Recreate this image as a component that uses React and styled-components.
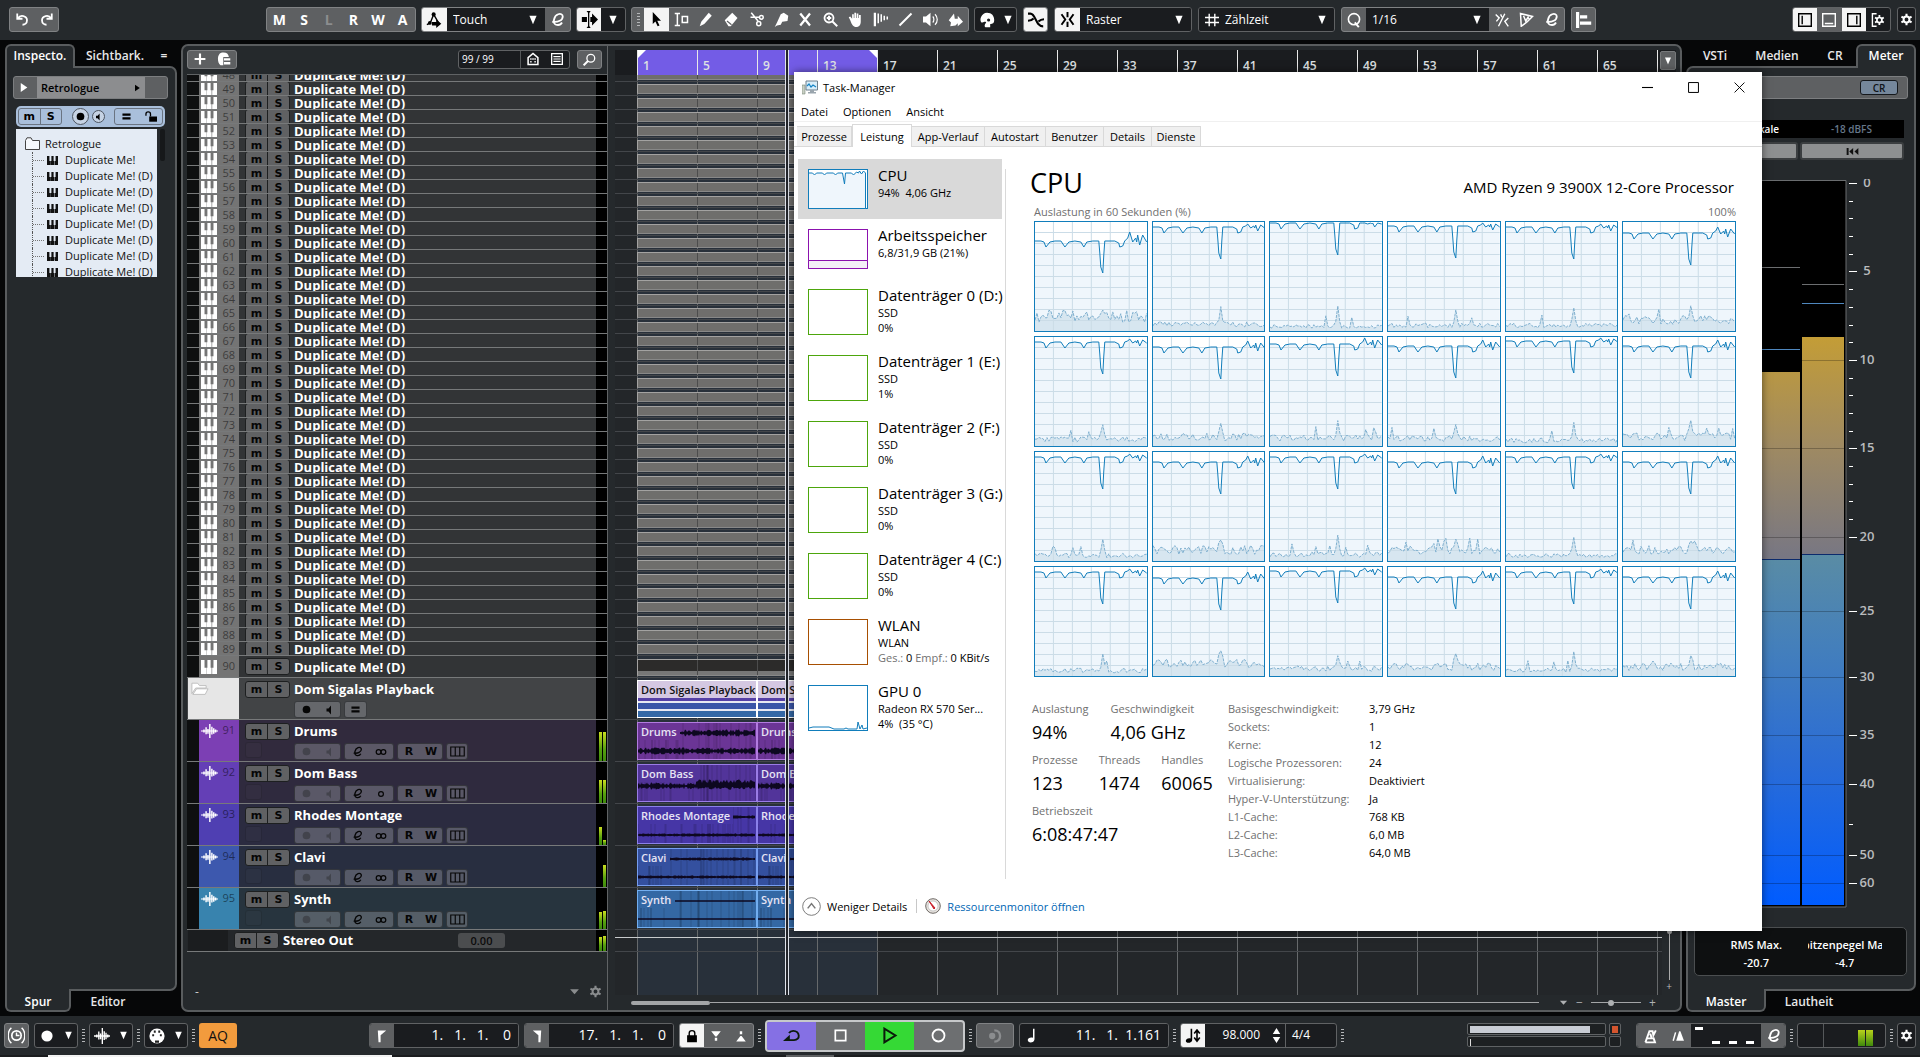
import React from "react";
import styled, { createGlobalStyle, css } from "styled-components";

/* ---------- theme values ---------- */
const c = {
  panel: "#25292c",
  edge: "#595c5e",
  btn: "#5e6062",
  btnEdge: "#808284",
  field: "#1a1c1f",
  fieldEdge: "#606264",
  light: "#f4f4f4",
  cpu: "#117dbb",
};

const Global = createGlobalStyle`
  * { box-sizing: border-box; }
  body { margin: 0; background: #060708; font-family: "Open Sans", "Noto Sans", sans-serif; font-size: 12px; color: #fff; }
  button, select { font-family: inherit; color: inherit; margin: 0; padding: 0; border: 0; background: none; border-radius: 0; }
  svg { display: block; flex: none; }
`;

/* ---------- pseudo random helper for drawings ---------- */
const rng = (seed) => {
  let s = seed * 7919 + 17;
  return () => {
    s = (s * 16807) % 2147483647;
    return s / 2147483647;
  };
};

/* ---------- icons ---------- */
const S = { fill: "none", stroke: "currentColor", strokeWidth: 2 };
const GEAR = (
  <>
    <circle cx="10" cy="10" r="4.500" {...S} strokeWidth="3" />
    <path d="M10 1v4M10 15v4M2.200 5.500l3.500 2M14.300 12.500l3.500 2M2.200 14.500l3.500-2M14.300 7.500l3.500-2" {...S} strokeWidth="3.200" />
  </>
);
const icons = {
  undo: <path d="M3 2v7h7M4 8.500C7 3 16 5 16 11c0 4-3 6-6 6" {...S} strokeWidth="2.400" />,
  redo: <path d="M17 2v7h-7M16 8.500C13 3 4 5 4 11c0 4 3 6 6 6" {...S} strokeWidth="2.400" />,
  down: <path d="M4 3h12l-6 14z" fill="currentColor" />,
  smallDown: <path d="M2 6h16l-8 9z" fill="currentColor" />,
  right: <path d="M5 2v16l12-8z" fill="currentColor" />,
  auto: (
    <>
      <path d="M1 16L5 14L9 4l7 12" {...S} strokeWidth="1.600" />
      <circle cx="9" cy="4" r="2.400" fill="currentColor" />
      <circle cx="4.500" cy="14" r="2.200" fill="currentColor" />
      <path d="M7 13h5v-3l6 5-6 5v-3H7z" fill="currentColor" />
    </>
  ),
  edit: <path d="M3 13c8 1 14-2 14-7 0-3-3-4-6-3-6 2-8 12-3 14 4 1 7-1 8-3" {...S} strokeWidth="2.400" />,
  scroll: (
    <>
      <path d="M1 7h6v6H1zM11 7h2V3l7 7-7 7v-4h-2z" fill="currentColor" />
      <path d="M9 0v20" stroke="currentColor" strokeWidth="1.500" />
      <path d="M6.500 0h5L9 3zM6.500 20h5L9 17z" fill="currentColor" />
    </>
  ),
  pointer: <path d="M5 0v16l3.500-3.500L11.500 19l2.500-1-3-6.500h5z" fill="currentColor" />,
  range: <><path d="M1 2h7M1 18h7M4.500 2v16" {...S} /><path d="M11 6h7v8h-7z" {...S} /></>,
  pencil: <path d="M1 19l2-6L13 1l4 4L7 16z" fill="currentColor" />,
  eraser: <><path d="M1 11L11 1l7 7-9 11H6z" fill="currentColor" /><path d="M4 12l6 5" stroke="#5e6062" strokeWidth="1.500" /></>,
  scissors: <><path d="M3 1l9 11M2 7l12 0" {...S} /><circle cx="16.500" cy="7" r="2.500" {...S} /><circle cx="13" cy="15.500" r="2.700" {...S} /></>,
  glue: <path d="M9 3l4-2 6 4-1 7-7 1-2 4-5 1-3 2 3-6z" fill="currentColor" />,
  mute: <path d="M3 2l13 16M16 2L3 18" {...S} strokeWidth="3" />,
  zoom: <><circle cx="8" cy="8" r="6" {...S} strokeWidth="2.400" /><path d="M12 12l7 7M5 8h6M8 5v6" {...S} strokeWidth="2.600" /></>,
  hand: <path d="M3 11L1 7l2-1 2.500 3V3h2.200v5h.8V1h2.300v7h.8V2h2.200v6h.8V4H17v9c0 4-2 7-6 7s-6-3-8-9z" fill="currentColor" />,
  comp: <path d="M1 1h3v18H1zM6 2h2v13H6zM10 3h2v10h-2zM14 5h2v6h-2zM18 6h2v4h-2z" fill="currentColor" />,
  line: <path d="M2 18L18 2" {...S} strokeWidth="2.600" />,
  speaker: <><path d="M0 6h4l6-5v18l-6-5H0z" fill="currentColor" /><path d="M13 6c2 2 2 6 0 8M16 3c4 4 4 10 0 14" {...S} strokeWidth="1.600" /></>,
  bucket: <path d="M1 11l7-9 1 7h4V5l7 8-7 6v-4l-3 3-7 1 1-5z" fill="currentColor" />,
  palette: <path fillRule="evenodd" d="M10 1c6 0 9 4 9 9 0 4-2 5-5 5v4H9c-3 0-2-4 0-6-2-2-3 1-6 0C0 10 3 1 10 1zM12 8a2 2 0 100 4 2 2 0 000-4z" fill="currentColor" />,
  cross: <path d="M0 2h3c7 0 6 16 16 16M0 11c4 0 5-1 7-3M20 9c-4 0-5 1-7 3" {...S} strokeWidth="2.600" />,
  snap: <path d="M10 0v7M10 13v7M2 3l5 7-5 7M18 3l-5 7 5 7" {...S} strokeWidth="2.600" />,
  hash: <path d="M6 1v18M14 1v18M0 6.500h20M0 13.500h20" {...S} />,
  q: <><circle cx="10" cy="9" r="7" {...S} /><path d="M11 13l5 6" {...S} strokeWidth="2.400" /></>,
  swing: <path d="M1 2l5 5-4 5M14 1L5 19M19 7l-5 5 5 7M8 2l2 4" {...S} />,
  quant: <path d="M2 2l16 4-7 7-8 6zM6 5l3 7 3-5 2 4" {...S} />,
  align: <path d="M2 0v20M5 6h9M5 14h14" {...S} strokeWidth="4" />,
  plus: <path d="M10 1v18M1 10h18" {...S} strokeWidth="3.600" />,
  preset: <><path d="M6 1c7-1 10 1 11 6H9v12H5C0 15 0 3 6 1z" fill="currentColor" /><path d="M10 10.500h9M10 16h9" {...S} strokeWidth="3.400" /></>,
  house: <><path d="M3 18V8l7-6 7 6v10z" {...S} strokeWidth="2.200" /><path d="M6 10h2M12 10h2M9 10h2M6 14h2M12 14h2" {...S} strokeWidth="2" /></>,
  list: <><path d="M1 1h18v18H1z" {...S} strokeWidth="2.400" /><path d="M4 6h12M4 10h12M4 14h12" {...S} /></>,
  search: <><circle cx="12" cy="8" r="6" {...S} /><path d="M8 12l-7 7" {...S} strokeWidth="3" /></>,
  piano: <path d="M0 0h4.400v11h2V20H0zM8 0h4v11h1.200V20H6.800v-9H8zM15.600 0H20v20h-6v-9h1.600z" fill="currentColor" />,
  wave: <path d="M0 10h20M3.500 8v4M6 4.500v10M8.200 7v7M10.400 0v20M12.800 4v11M15 6v8M17.200 8v4" stroke="currentColor" strokeWidth="1.700" fill="none" />,
  folder: <path d="M2 4h6l2 3h7v3H6l-4 7zM7 11h12l-3 7H3z" fill="#fff" stroke="#b9b9b9" strokeWidth="1" />,
  dot: <circle cx="10" cy="10" r="7" fill="currentColor" />,
  mon: <path d="M5 7h4l5-6v18l-5-6H5z" fill="currentColor" />,
  eq: <path d="M1 6h18M1 14h18" {...S} strokeWidth="5" />,
  stereo: <><circle cx="6" cy="10" r="4" {...S} /><circle cx="14" cy="10" r="4" {...S} /></>,
  mono: <circle cx="10" cy="10" r="4" {...S} />,
  lanes: <path d="M1 4h18v12H1zM7 4v12M13 4v12" {...S} strokeWidth="1.500" />,
  unlock: <><path d="M8 10h12v8H8z" fill="currentColor" /><path d="M10 10V6c0-4-7-4-7 0v3" {...S} /></>,
  lock: <><path d="M3 9h14v10H3z" fill="currentColor" /><path d="M6 10V6c0-5 8-5 8 0v4" {...S} /></>,
  gear: GEAR,
  zoneL: <path d="M1 1h18v18H1zM6 4v12" {...S} />,
  zoneB: <path d="M1 1h18v18H1zM4 15h12" {...S} />,
  zoneR: <path d="M1 1h18v18H1zM14 4v12" {...S} />,
  setup: <><path d="M8 1H2v18h6" {...S} /><g transform="translate(4 2) scale(.8)">{GEAR}</g></>,
  clock: <><circle cx="10" cy="10" r="5.500" {...S} /><path d="M10 6.500V10h3.500M4 1c-5 4-5 14 0 18M16 1c5 4 5 14 0 18" {...S} strokeWidth="1.700" /></>,
  midi: <><circle cx="10" cy="10" r="9.500" fill="currentColor" /><path d="M4 9h2.400M6 4.500h2.400M11.600 4.500H14M13.600 9H16M7.500 17h5" stroke="#222" strokeWidth="2.600" /></>,
  locL: <path d="M4 2h12L8 9v10H5z" fill="currentColor" />,
  locR: <path d="M16 2H4l8 7v10h3z" fill="currentColor" />,
  punchI: <path d="M2 2h16l-7 9H9zM8 13h4v5H8z" fill="currentColor" />,
  punchO: <path d="M2 19h16l-7-9H9zM8 2h4v5H8z" fill="currentColor" />,
  cycle: <><path d="M5 15.500h8c8 0 7-11-1-11-3 0-4 1-5 2.500" {...S} strokeWidth="2.200" /><path d="M0 16.500L8 9v7.500z" fill="currentColor" /></>,
  stop: <path d="M2 2h16v16H2z" {...S} strokeWidth="2.600" />,
  play: <path d="M4 2v16l13-8z" {...S} strokeWidth="2.400" />,
  rec: <circle cx="10" cy="10" r="8" {...S} strokeWidth="2.400" />,
  remote: <><circle cx="6" cy="10" r="4.500" fill="currentColor" /><path d="M9 2c11 0 11 16 0 16" {...S} strokeWidth="3.400" /></>,
  note: <path d="M12 1h2v14c0 5-9 6-9 1 0-3 4-4 7-3z" fill="currentColor" />,
  tempo: <><path d="M7 1h2v14c0 4-8 5-8 1 0-2 3-4 6-3z" fill="currentColor" /><path d="M15 2v15M11.500 7L15 2.500 18.500 7M11.500 12l3.500 4.500 3.500-4.500" {...S} strokeWidth="2" /></>,
  spin: <path d="M10 0l5 8H5zM10 20l5-8H5z" fill="currentColor" />,
  metro: <path d="M3 18L8 4h4l1 5 3-6M5 13h6l-2-6M3 18h12l-2-6" {...S} strokeWidth="2.400" />,
  count: <><path d="M2 18L6 4" {...S} strokeWidth="2.400" /><path d="M7 18L12 2h2l6 16z" fill="currentColor" /></>,
  rew: <path d="M1 2h3v16H1zM11 2v16l-6-8zM19 2v16l-6-8z" fill="currentColor" />,
  min: <path d="M0 10h20" {...S} />,
  max: <path d="M1 1h18v18H1z" {...S} strokeWidth="1.800" />,
  close: <path d="M1 1l18 18M19 1L1 19" {...S} strokeWidth="1.700" />,
  chev: <><circle cx="10" cy="10" r="9.300" {...S} strokeWidth="1" /><path d="M6 12l4-5 4 5" {...S} strokeWidth="1.600" /></>,
};
const Icon = ({ n, size = 14, w }) => (
  <svg width={w || size} height={size} viewBox="0 0 20 20" preserveAspectRatio={w ? "none" : "xMidYMid meet"} aria-hidden="true">
    {icons[n]}
  </svg>
);

/* ---------- shared parts ---------- */
const Page = styled.div`
  position: relative;
  display: grid;
  grid-template-rows: 40px minmax(0, 1fr) 41px;
  height: 100vh;
  min-height: 900px;
  overflow: hidden;
`;
const Bar = styled.header`
  display: flex;
  align-items: center;
  background: ${c.panel};
  padding: 0 4px 1px 9px;
`;
const Section = styled.div`
  display: flex;
  align-items: center;
  gap: ${(p) => p.$gap || 0}px;
  width: ${(p) => (p.$w ? `${p.$w}px` : "auto")};
  margin-left: ${(p) => p.$ml || (p.$right ? "auto" : 0)};
`;
const Group = styled.div`
  display: flex;
  height: 25px;
  width: ${(p) => (p.$w ? `${p.$w}px` : "auto")};
  border: 1px solid ${(p) => (p.$dark ? c.fieldEdge : c.btnEdge)};
  border-radius: 3px;
  background: ${(p) => (p.$dark ? c.field : c.btn)};
  overflow: hidden;
`;
const Cell = styled.button`
  flex: ${(p) => (p.$w ? "none" : 1)};
  width: ${(p) => p.$w || 0}px;
  display: flex;
  align-items: center;
  justify-content: center;
  font-weight: 700;
  font-size: 14px;
  color: ${(p) => (p.$on ? "#000" : p.$dim ? "#8b8d8f" : "#fff")};
  background: ${(p) => (p.$on ? c.light : p.$gray ? c.btn : "transparent")};
`;
const SelectBox = styled.label`
  flex: 1;
  display: flex;
  align-items: center;
  gap: 6px;
  padding: 0 6px 0 6px;
  background: ${c.field};
  select { flex: 1; min-width: 0; appearance: none; font-size: 12px; outline: 0; }
`;
const Select = ({ label, value, icon }) => (
  <SelectBox aria-label={label}>
    {icon && <Icon n={icon} size={14} />}
    <select aria-label={label} defaultValue={value}><option>{value}</option></select>
    <Icon n="down" size={12} />
  </SelectBox>
);
const Grip = styled.i`
  width: ${(p) => p.$w || 11}px;
  display: flex;
  justify-content: center;
  align-items: center;
  &::before {
    content: "";
    width: 3px;
    height: 13px;
    background: repeating-linear-gradient(#b4b6b8 0 1px, transparent 1px 3px);
  }
`;

/* ---------- panel with joined tabs ---------- */
const Panel = styled.section`
  display: flex;
  flex-direction: column;
  min-height: 0;
  margin: ${(p) => (p.$plain ? "4px 0" : "4px 0")};
`;
const PanelBody = styled.div`
  flex: 1;
  min-height: 0;
  display: flex;
  flex-direction: column;
  background: ${c.panel};
  border: 2px solid ${c.edge};
  border-radius: 7px;
  border-top-left-radius: ${(p) => (p.$side === "left" ? 0 : 7)}px;
  border-top-right-radius: ${(p) => (p.$side === "right" ? 0 : 7)}px;
  border-bottom-left-radius: ${(p) => (p.$side ? 0 : 7)}px;
  padding: ${(p) => p.$pad || 0};
`;
const Tabs = styled.div`
  position: relative;
  z-index: 1;
  display: flex;
  height: ${(p) => (p.$bottom ? 23 : 24)}px;
  margin: ${(p) => (p.$bottom ? "-2px 0 0" : "0 0 -2px")};
  justify-content: ${(p) => (p.$end ? "flex-end" : "flex-start")};
`;
const Tab = styled.button`
  height: 100%;
  width: ${(p) => p.$w}px;
  padding: ${(p) => (p.$bottom ? "2px 0 0" : "0 0 1px")};
  font-size: 12px;
  font-weight: 600;
  white-space: nowrap;
  color: #e8e8e8;
  ${(p) => p.$on && css`
    color: #fff;
    background: ${c.panel};
    border: 2px solid ${c.edge};
    ${p.$bottom
      ? "border-radius: 0 0 6px 6px; border-top: 0;"
      : "border-radius: 6px 6px 0 0; border-bottom: 0; padding-bottom: 3px;"}
    ${p.$bottom && "padding-top: 4px;"}
  `}
`;
const Workspace = styled.main`
  display: grid;
  grid-template-columns: 172px minmax(0, 1fr) 230px;
  gap: 4px;
  padding: 0 4px 0 5px;
  min-height: 0;
`;

/* ---------- inspector ---------- */
const Slot = styled.div`
  display: flex;
  align-items: center;
  height: 23px;
  border: 1px solid #7c7e80;
  border-radius: 3px;
  background: ${c.btn};
`;
const SlotName = styled.div`
  display: flex;
  align-items: center;
  justify-content: space-between;
  width: 108px;
  height: 100%;
  padding: 0 4px;
  margin-left: 5px;
  background: #8c8d8f;
  color: #000;
  font-size: 11px;
  font-weight: 600;
`;
const BlueBar = styled.div`
  display: flex;
  align-items: center;
  justify-content: space-between;
  height: 21px;
  margin: 7px 3px 2px;
  padding: 0 2px;
  border-radius: 5px;
  background: #a9bfdb;
  color: #000;
`;
const BlueGroup = styled.div`
  display: flex;
  width: ${(p) => p.$w}px;
  height: 17px;
  border: 1px solid #6a7482;
  border-radius: 3px;
  button { flex: 1; display: flex; align-items: center; justify-content: center; font: 700 11px "DejaVu Sans", sans-serif; color: #000; }
  button + button { border-left: ${(p) => (p.$plain ? 0 : "1px solid #6a7482")}; }
`;
const Round = styled.button`
  display: grid;
  place-items: center;
  width: ${(p) => p.$s}px;
  height: ${(p) => p.$s}px;
  border: 1px solid #4d5560;
  border-radius: 50%;
  background: #c6d3e4;
  color: #000;
`;
const TreeWrap = styled.div`
  display: flex;
  gap: 3px;
  padding: 0 3px;
`;
const TreeThumb = styled.i`
  width: 5px;
  height: 32px;
  border-radius: 2px;
  background: #16181a;
`;
const Tree = styled.ul`
  width: 141px;
  height: 148px;
  margin: 0;
  padding: 7px 0 0;
  list-style: none;
  overflow: hidden;
  background: #e4ebf4;
  color: #111;
  li { display: flex; align-items: center; gap: 7px; height: 16px; padding-left: 16px; font-size: 11px; line-height: 16px; white-space: nowrap; }
  li:first-child { padding-left: 9px; gap: 5px; }
  li + li::before { content: ""; align-self: stretch; width: 11px; margin-right: -4px; border-left: 1px dotted #555; background: linear-gradient(90deg, #777 1px, transparent 1px) 0 8px / 2px 1px repeat-x; }
`;

/* ---------- track list ---------- */
const Center = styled.div`
  display: flex;
  gap: 7px;
  flex: 1;
  min-height: 0;
  padding: 0 4px;
`;
const TrackCol = styled.div`
  display: flex;
  flex-direction: column;
  width: 421px;
  border-right: 1px solid #606365;
`;
const TrackHead = styled.div`
  display: flex;
  align-items: center;
  height: 29px;
  padding: 0 5px 2px 0;
  border-bottom: 1px solid #606365;
`;
const HeadBox = styled(Group)`
  height: 19px;
  margin-left: ${(p) => (p.$auto ? "auto" : 0)};
  margin-right: ${(p) => (p.$auto ? 7 : 0)}px;
`;
const Count = styled.output`
  width: 62px;
  padding-left: 3px;
  font-size: 10px;
  line-height: 17px;
  border-right: 1px solid #55585a;
`;
const Scroller = styled.div`
  flex: 1;
  min-height: 0;
  overflow: hidden;
`;
const Scrolled = styled.div`
  margin-top: -7px;
`;
const Row = styled.div`
  display: flex;
  height: ${(p) => p.$h}px;
  overflow: hidden;
  border-bottom: 1px solid #77797a;
  background: ${(p) => p.$bg || "#323436"};
  padding-left: ${(p) => (p.$folder ? 1 : 12)}px;
  box-shadow: inset ${(p) => (p.$folder ? 0 : 12)}px 0 0 #0e0f10;
`;
const Strip = styled.div`
  flex: none;
  display: flex;
  justify-content: space-between;
  width: ${(p) => p.$w || 40}px;
  margin-bottom: -1px;
  padding: ${(p) => p.$pt || 0}px 4px 0 2px;
  background: ${(p) => p.$bg || "#747474"};
  font-size: 11px;
  line-height: 14px;
  color: rgba(0, 0, 0, 0.5);
  overflow: hidden;
  svg { color: #fff; margin-top: 1px; }
`;
const MS = styled.div`
  flex: none;
  display: flex;
  height: 17px;
  width: 45px;
  margin: ${(p) => p.$mt || 0}px 4px 0 ${(p) => p.$ml || 6}px;
  border: 1px solid #1d1f20;
  border-radius: 3px;
  background: #606163;
  overflow: hidden;
  button { flex: 1; font: 700 11px/13px "DejaVu Sans", sans-serif; color: #050505; }
  button + button { border-left: 1px solid #1d1f20; }
`;
const TrackMain = styled.div`
  flex: 1;
  padding-top: ${(p) => p.$pt || 0}px;
`;
const Name = styled.div`
  font-size: 13px;
  font-weight: 700;
  line-height: ${(p) => p.$lh || 14}px;
  white-space: nowrap;
`;
const Controls = styled.div`
  display: flex;
  gap: 3px;
  margin-top: 2px;
`;
const Ctl = styled.div`
  display: flex;
  width: ${(p) => p.$w}px;
  height: 17px;
  border: 1px solid #1d1f2299;
  border-radius: 3px;
  background: rgba(150, 152, 160, 0.42);
  color: #060606;
  button { flex: 1; display: flex; align-items: center; justify-content: center; font: 700 11px "DejaVu Sans", sans-serif; color: ${(p) => (p.$dim ? "#33353a99" : "#060606")}; }
`;
const Level = styled.div`
  flex: none;
  display: flex;
  align-items: flex-end;
  justify-content: center;
  gap: 1px;
  width: 11px;
  padding: 1px 1px 0 2px;
  background: #000;
`;
const Led = styled.i`
  width: 3px;
  height: ${(p) => p.$h}px;
  background: linear-gradient(#c8dc20, #57a010 60%, #3f8a0c);
`;
const Ghost = styled.i`
  flex: none;
  align-self: flex-end;
  width: 17px;
  height: 16px;
  margin: 0 -23px 3px 6px;
  border: 1px solid #00000026;
  border-radius: 3px;
  background: #ffffff05;
`;
const ListFoot = styled.div`
  display: flex;
  align-items: center;
  gap: 9px;
  height: 32px;
  padding: 0 5px 6px 8px;
  color: #8a8c8e;
  span { margin-right: auto; color: #ccc; }
`;
const Zero = styled.output`
  width: 47px;
  height: 15px;
  margin: 3px 91px 0 0;
  border-radius: 3px;
  background: #4b4d4f;
  color: #0b0b0b;
  font-size: 11px;
  font-weight: 600;
  line-height: 15px;
  text-align: center;
`;

/* ---------- arrange area ---------- */
const Arrange = styled.div`
  position: relative;
  flex: 1;
  min-width: 0;
  display: flex;
  flex-direction: column;
  padding-top: 4px;
`;
const Ruler = styled.div`
  display: flex;
  height: 25px;
  padding-left: 22px;
  background: #1a1c1f;
  overflow: hidden;
`;
const Bars = styled.div`
  display: flex;
  flex: 1;
  min-width: 0;
  overflow: hidden;
`;
const Tick = styled.div`
  position: relative;
  flex: none;
  width: 60px;
  height: 25px;
  padding: 8px 0 0 5px;
  border-left: 1px solid #e8e8e8;
  background: ${(p) => (p.$loop ? "#735ce6" : "transparent")};
  font-size: 12px;
  font-weight: 600;
  line-height: 16px;
  color: #dfe1e3;
  &::before {
    content: ${(p) => (p.$edge ? '""' : "none")};
    position: absolute;
    top: 0;
    ${(p) => (p.$edge === "l" ? "left: 0" : "right: 0")};
    width: 8px;
    height: 8px;
    background: #fff;
    clip-path: ${(p) => (p.$edge === "l" ? "polygon(0 0, 100% 0, 0 100%)" : "polygon(0 0, 100% 0, 100% 100%)")};
  }
`;
const RulerBtn = styled.button`
  width: 16px;
  height: 19px;
  margin-top: 1px;
  display: grid;
  place-items: center;
  border: 1px solid #77797b;
  border-radius: 2px;
  background: ${c.btn};
`;
const LaneArea = styled.div`
  display: flex;
  flex: 1;
  min-height: 0;
`;
const Lanes = styled.div`
  flex: 1;
  min-width: 0;
  overflow: hidden;
  background:
    repeating-linear-gradient(90deg, #66696b 0 1px, transparent 1px 60px) 22px 0 no-repeat,
    linear-gradient(#28303a, #28303a) 22px 0 / 240px 100% no-repeat,
    #232629;
`;
const Lane = styled.div`
  display: flex;
  align-items: ${(p) => (p.$line ? "flex-start" : "flex-end")};
  height: ${(p) => p.$h}px;
  padding: 0 0 1px 22px;
  border-bottom: 1px solid #43464a;
`;
const MidiPart = styled.div`
  width: 240px;
  height: ${(p) => (p.$tall ? 17 : 10)}px;
  border: 1px solid #a3a2a1;
  border-bottom-color: #888;
  background: repeating-linear-gradient(90deg, transparent 0 59px, #4c4c4c 59px 60px), ${(p) => (p.$tall ? "linear-gradient(#2c2b2a 75%, #777 75%)" : "#6f6e6c")};
`;
const Clip = styled.div`
  position: relative;
  flex: none;
  width: 120px;
  height: 38px;
  border: 1px solid ${(p) => p.$edge};
  background: ${(p) => p.$bg};
  overflow: hidden;
  svg { margin-top: -17px; }
`;
const ClipName = styled.div`
  position: relative;
  width: fit-content;
  padding: 0 3px;
  background: ${(p) => p.$bg};
  font-size: 11px;
  font-weight: 600;
  line-height: 17px;
  height: 17px;
  white-space: nowrap;
  color: ${(p) => (p.$dark ? "#111" : "#e6e4f4")};
`;
const AutoLine = styled.i`
  flex: 1;
  height: 1px;
  margin: 7px 0 0 -22px;
  background: #c8cacc;
`;
const Playhead = styled.i`
  position: absolute;
  top: 4px;
  bottom: 15px;
  left: 170px;
  width: 4px;
  border: solid #dfe2ea;
  border-width: 0 1px;
  background: #22242a;
`;
const VZoom = styled.div`
  width: 14px;
  display: flex;
  flex-direction: column;
  align-items: center;
  justify-content: flex-end;
  padding-bottom: 3px;
  font-size: 10px;
  line-height: 12px;
  color: #bbb;
  i { width: 1px; height: 46px; background: #aaa; }
  b { width: 5px; height: 5px; border-radius: 50%; background: #aaa; }
`;
const HBar = styled.div`
  display: flex;
  align-items: center;
  height: 15px;
  padding-left: 16px;
  color: #aeb0b2;
  font-size: 12px;
`;
const Thumb = styled.i`
  width: 79px;
  height: 4px;
  border-radius: 2px;
  background: #a3a5a7;
`;
const Rail = styled.i`
  flex: ${(p) => (p.$w ? "none" : 1)};
  width: ${(p) => p.$w || 0}px;
  height: 1px;
  background: #a3a5a7;
`;
const HZoom = styled.div`
  display: flex;
  align-items: center;
  gap: 8px;
  width: 137px;
  padding-left: 20px;
  b { width: 6px; height: 6px; border-radius: 50%; background: #aeb0b2; margin: 0 -8px; }
`;

/* ---------- right meter panel ---------- */
const MeterHead = styled.div`
  display: flex;
  align-items: center;
  justify-content: flex-end;
  height: 23px;
  padding-right: 9px;
  border: 1px solid #7c7e80;
  border-radius: 3px;
  background: ${c.btn};
  button { width: 38px; height: 15px; border: 1px solid #15181b; border-radius: 3px; background: #75879b; color: #101418; font-size: 10px; font-weight: 600; line-height: 12px; }
`;
const ScaleBar = styled.div`
  display: flex;
  height: 18px;
  margin: 21px 4px 4px 0;
  background: #000;
  font-size: 10px;
  font-weight: 600;
  line-height: 18px;
  text-align: center;
  span { flex: 1; }
  span + span { color: #66778a; }
`;
const ScaleBtns = styled.div`
  display: flex;
  gap: 2px;
  margin: 0 4px 19px 0;
  button { flex: 1; height: 18px; display: grid; place-items: center; border: 2px solid #3b3e40; border-radius: 3px; background: #8d8f90; color: #111; }
`;
const Readout = styled.dl`
  display: flex;
  gap: 14px;
  height: 49px;
  margin: 18px 1px 0 0;
  padding: 8px 24px;
  border: 1px solid #4b4e50;
  border-radius: 5px;
  background: #0e1011;
  font-size: 11px;
  font-weight: 600;
  line-height: 18px;
  text-align: center;
  div { flex: 1; display: flex; flex-direction: column; align-items: center; overflow: hidden; white-space: nowrap; }
  dt, dd { margin: 0; }
`;

const ticks = [[0, 182], [5, 270], [10, 359], [15, 447], [20, 536], [25, 610], [30, 676], [35, 734], [40, 783], [50, 854], [60, 882]];
const minor = [200, 217, 235, 253, 288, 306, 324, 341, 377, 394, 412, 430, 465, 483, 500, 518, 823];
const Meter = () => (
  <svg width="188" height="730" viewBox="1694 178 188 730">
    <defs>
      <linearGradient id="warm" x1="0" y1="335" x2="0" y2="555" gradientUnits="userSpaceOnUse">
        <stop offset="0" stopColor="#c49d36" /><stop offset=".5" stopColor="#9f8a62" /><stop offset="1" stopColor="#787783" />
      </linearGradient>
      <linearGradient id="cool" x1="0" y1="553" x2="0" y2="904" gradientUnits="userSpaceOnUse">
        <stop offset="0" stopColor="#5a8ca4" /><stop offset=".25" stopColor="#4580ba" /><stop offset=".6" stopColor="#2a6cd6" /><stop offset="1" stopColor="#005cff" />
      </linearGradient>
    </defs>
    <path d="M1695 179.500h151V906h-151z" fill="#000" stroke="#6a6d6f" strokeWidth="1" />
    <path d="M1704 371h96v187h-96zM1802 336h42v217h-42z" fill="url(#warm)" />
    <path d="M1704 558h96v346h-96zM1802 553h42v351h-42z" fill="url(#cool)" />
    <path d="M1704 558.500h96M1802 553.500h42" stroke="#0b2a6c" />
    <path d="M1704 266.500h96M1802 283.500h42" stroke="#6c6e70" />
    <path d="M1704 348.500h96M1802 302.500h42" stroke="#4f87be" />
    {ticks.map(([v, y]) => (
      <g key={v}>
        {v >= 10 && <path d={`M1704 ${y + 0.5}h96M1802 ${y + 0.5}h42`} stroke="#000" strokeOpacity=".25" />}
        <path d={`M1849 ${y + 0.5}h8`} stroke="#fff" />
        <text x="1867" y={y + 4} fill="#b9bbbd" fontSize="13" fontWeight="600" textAnchor="middle">{v}</text>
      </g>
    ))}
    {minor.map((y) => <path key={y} d={`M1849 ${y + 0.5}h4`} stroke="#fff" />)}
  </svg>
);
const MeterWrap = styled.div`
  display: flex;
`;

/* ---------- transport ---------- */
const Transport = styled.footer`
  position: relative;
  display: flex;
  align-items: center;
  padding: 0 4px;
  background: ${c.panel};
  border-bottom: 2px solid #1b1d1f;
`;
const Time = styled.output`
  flex: 1;
  padding-right: 7px;
  font-size: ${(p) => (p.$small ? 12 : 14)}px;
  line-height: 22px;
  white-space: pre;
  text-align: right;
  background: ${c.field};
`;
const Meas = styled.output`
  width: 51px;
  padding-left: 6px;
  border-left: 1px solid ${c.fieldEdge};
  font-size: 12px;
  line-height: 22px;
`;
const SpinBox = styled.button`
  display: grid;
  place-items: center;
  width: 18px;
`;
const Orange = styled.button`
  width: 38px;
  height: 25px;
  border-radius: 3px;
  background: #f29b3d;
  color: #111;
  font-size: 14px;
`;
const Deck = styled.div`
  display: flex;
  width: 200px;
  height: 32px;
  border: 2px solid #c6c8ca;
  border-radius: 4px;
  background: #6d6f71;
  overflow: hidden;
`;
const DeckBtn = styled.button`
  flex: 1;
  display: grid;
  place-items: center;
  background: ${(p) => p.$bg || "transparent"};
  color: ${(p) => (p.$bg ? "#0b1a0b" : "#fff")};
`;
const Load = styled.div`
  display: grid;
  grid-template-rows: 12px 11px;
  gap: 1px;
  width: ${(p) => p.$w}px;
  height: 25px;
  i { border: 1px solid #5f6264; border-radius: 2px; background: #1d2022; padding: 2px; }
  i::before { content: ""; display: block; height: 7px; }
  i:first-child::before { width: ${(p) => p.$fill}%; background: ${(p) => p.$color}; }
  i:last-child::before { width: ${(p) => (p.$tick ? 1 : 0)}px; background: #ddd; }
`;
const Dashes = styled.div`
  flex: 1;
  display: flex;
  gap: 9px;
  align-items: flex-end;
  padding: 3px 4px;
  background: ${c.field};
  i { width: 8px; height: 3px; background: #fff; }
  i:first-child { align-self: flex-start; }
`;
const OutMeter = styled.div`
  flex: 1;
  display: flex;
  align-items: flex-end;
  justify-content: flex-end;
  gap: 1px;
  padding: 0 12px 1px 0;
  background: linear-gradient(90deg, transparent 25px, #55585a 25px 26px, transparent 26px);
  i { width: 7px; height: 16px; background: linear-gradient(#b8d21c, #3f8a0c); }
`;
const EdgeStrip = styled.i`
  position: absolute;
  bottom: -2px;
  left: ${(p) => p.$x}px;
  width: ${(p) => p.$w}px;
  height: 2px;
  background: ${(p) => p.$bg};
`;

/* ---------- task manager ---------- */
const Window = styled.section`
  position: absolute;
  left: 794px;
  top: 72px;
  width: 968px;
  height: 859px;
  display: flex;
  flex-direction: column;
  background: #fff;
  color: #000;
  box-shadow: 0 0 8px #0008;
  font-size: 11px;
`;
const TitleBar = styled.div`
  display: flex;
  align-items: center;
  gap: 5px;
  height: 30px;
  padding: 0 17px 0 8px;
`;
const WinBtns = styled.div`
  display: flex;
  gap: 35px;
  margin-left: auto;
  button { display: grid; place-items: center; width: 11px; height: 20px; }
`;
const Menu = styled.nav`
  display: flex;
  gap: 15px;
  height: 20px;
  padding: 0 7px;
  border-bottom: 1px solid #f0f0f0;
  line-height: 20px;
`;
const TmTabs = styled.div`
  display: flex;
  align-items: flex-end;
  height: 25px;
  padding-left: 3px;
  border-bottom: 1px solid #d9d9d9;
`;
const TmTab = styled.button`
  width: ${(p) => p.$w}px;
  height: ${(p) => (p.$on ? 23 : 20)}px;
  border: 1px solid #d9d9d9;
  border-width: 1px 1px 0 ${(p) => (p.$on ? 1 : 0)}px;
  background: ${(p) => (p.$on ? "#fff" : "#f0f0f0")};
  margin-bottom: ${(p) => (p.$on ? -1 : 0)}px;
  font-size: 11px;
`;
const TmBody = styled.div`
  display: flex;
  flex: 1;
  padding: 12px 26px 0 4px;
`;
const Side = styled.div`
  width: 204px;
`;
const SideItem = styled.button`
  display: flex;
  gap: 10px;
  width: 204px;
  height: ${(p) => (p.$short ? 60 : 66)}px;
  padding: 10px 0 0 10px;
  text-align: left;
  background: ${(p) => (p.$on ? "#d9d9d9" : "transparent")};
`;
const SideText = styled.div`
  margin-top: -4px;
  font-size: 11px;
  line-height: 15px;
  white-space: nowrap;
  strong { display: block; font-size: 15px; font-weight: 400; line-height: 20px; }
  span { display: block; white-space: pre; }
  em { font-style: normal; color: #707070; }
`;
const Divider = styled.i`
  width: 1px;
  height: 710px;
  margin: 10px 24px 0 3px;
  background: #d9d9d9;
`;
const Detail = styled.div`
  flex: 1;
`;
const HeadLine = styled.div`
  display: flex;
  justify-content: space-between;
  align-items: flex-end;
  height: 42px;
  padding-right: 2px;
  font-size: 15px;
  line-height: 27px;
  h1 { margin: 0; font-size: 27px; font-weight: 400; line-height: 36px; }
`;
const Caption = styled.div`
  display: flex;
  justify-content: space-between;
  height: 20px;
  padding-left: 4px;
  font-size: 11px;
  line-height: 22px;
  color: #707070;
`;
const Cores = styled.div`
  display: grid;
  grid-template-columns: repeat(6, 1fr);
  gap: 4px;
  padding-left: 4px;
  svg { width: 100%; height: 111px; border: 1px solid ${c.cpu}; background: #fff; }
`;
const Stats = styled.div`
  display: flex;
  padding: 23px 0 0 2px;
`;
const Big = styled.div`
  width: 196px;
`;
const BigRow = styled.div`
  display: flex;
  gap: ${(p) => p.$gap}px;
  height: 51px;
`;
const Figure = styled.div`
  font-size: 11px;
  line-height: 18px;
  color: #707070;
  white-space: nowrap;
  output { display: block; font-size: 18px; line-height: 28px; color: #000; }
`;
const Specs = styled.table`
  align-self: flex-start;
  border-collapse: collapse;
  font-size: 11px;
  line-height: 18px;
  white-space: nowrap;
  th { width: 141px; padding: 0; font-weight: 400; text-align: left; color: #707070; }
  td { padding: 0; }
`;
const TmFoot = styled.div`
  display: flex;
  align-items: center;
  height: 50px;
  padding-left: 8px;
  svg { margin-right: 6px; }
  button { display: flex; align-items: center; font-size: 11px; }
  button svg { color: #777; }
  a { color: #0066b4; text-decoration: none; }
  i { width: 1px; height: 14px; margin: 0 8px 0 9px; background: #c8c8c8; }
`;

/* ---------- chart shapes ---------- */
const SHAPE = [[0, 0], [6, 0], [9, 1], [11, 6], [15, 1], [20, 0], [26, 0], [30, 6], [34, 1], [40, 0], [46, 1], [49, 6], [52, 1], [58, 0], [64, 0], [65, 12], [66, 26], [68, 32], [69, 14], [70, 0], [80, 0], [84, 2], [85, 6], [88, 5], [90, 0], [93, -1], [95, -3], [98, 1], [101, -1], [102, 1], [103, -2], [105, 4], [108, -2], [112, 1]];
const BASES = [19, 5, 1, 4, 5, 11, 5, 10, 7, 9, 4, 9, 5, 10, 5, 10, 5, 10, 5, 11, 4, 10, 5, 10];
const NOISE = [16, 7, 5, 6, 6, 12, 7, 10, 9, 8, 6, 10, 6, 12, 7, 12, 6, 12, 6, 13, 8, 10, 6, 10];
const Core = ({ i }) => {
  const r = rng(i + 3);
  const wild = i === 0 ? 3 : BASES[i] > 6 ? 2 : 1;
  const top = SHAPE.map(([x, d]) => `${x} ${Math.max(1, BASES[i] + (d < 0 ? d * wild : d))}`).join("L");
  const pts = [];
  for (let x = 0; x <= 112; x += 2) {
    let h = NOISE[i] * (0.55 + r() * 0.75);
    if (x === 68) h = 20 + r() * 6;
    else if (Math.abs(x - 68) === 2) h += 5;
    else if (i % 6 !== 1 && r() > 0.96) h += 9;
    pts.push(`${x} ${(109 - h).toFixed(1)}`);
  }
  const low = pts.join("L");
  return (
    <svg viewBox="0 0 112 109" preserveAspectRatio="none" role="img" aria-label={`CPU ${i}`}>
      <path d={`M${top}V109H0z`} fill="#eff6fc" />
      <path d={`M${low}V109H0z`} fill="#d7e6f0" />
      <path d={Array.from({ length: 5 }, (_, k) => `M${19 * (k + 1) - 0.5} 0V109`).join("") + Array.from({ length: 9 }, (_, k) => `M0 ${11 * (k + 1) - 0.5}H112`).join("")} stroke="#cbdce7" fill="none" />
      <path d={`M${low}`} fill="none" stroke="#7fb0cf" strokeDasharray="3 1" />
      <path d={`M${top}`} fill="none" stroke={c.cpu} />
    </svg>
  );
};
const Mini = ({ kind, color, h }) => (
  <svg width="60" height={h} viewBox={`0 0 60 ${h}`}>
    <rect x=".5" y=".5" width="59" height={h - 1} fill="#fff" stroke={color} />
    {kind === "cpu" && <path d="M.5 4h4l2 2 2-2h6l2 2 2-2h7l2 2 2-2h5l2 11 1-11h6l2 2 3-3 2 1 1-2 2 3 2-3 2 2V39.500H.5z" fill="#eff6fc" stroke={color} />}
    {kind === "mem" && <path d="M.5 31.500h59V39.500H.5z" fill="#f4f0f7" stroke={color} />}
    {kind === "gpu" && <path d="M1 43l4-1h16l5 2h10l2-1 2 1h9l1-7 2 7 2-4 1 4 4-1" fill="none" stroke={color} />}
  </svg>
);

const Waveform = ({ seed, rows }) => {
  const r = rng(seed);
  const shade = Array.from({ length: 26 }, () => `M${Math.round(r() * 118)} 0V37`).join("");
  const shapes = rows.map(([x0, y, amp]) => {
    const up = [];
    const dn = [];
    for (let x = x0; x <= 117; x += 1) {
      const a = 0.7 + r() * amp;
      up.push(`${x} ${(y - a).toFixed(1)}`);
      dn.unshift(`${x} ${(y + a).toFixed(1)}`);
    }
    return `M${up.join("L")}L${dn.join("L")}z`;
  });
  return (
    <svg width="118" height="37" viewBox="0 0 118 37">
      <path d={shade} stroke="#000" strokeOpacity=".14" />
      <path d={shapes.join("")} fill="#0d0820" />
    </svg>
  );
};

/* ---------- data ---------- */
const audio = [
  { n: 91, name: "Drums", strip: "#7c3fb4", row: "#312a3d", clip: "#6b3596", edge: "#b27be0", led: [29, 29], w: [[42, 10, 3], [0, 28, 3]] },
  { n: 92, name: "Dom Bass", strip: "#643fb6", row: "#2f2a3e", clip: "#52349a", edge: "#9a7ce6", led: [23, 23], mono: true, w: [[58, 19, 4], [0, 21, 3]] },
  { n: 93, name: "Rhodes Montage", strip: "#4f3fb2", row: "#2b2b40", clip: "#4636a6", edge: "#8b80ea", led: [18, 5], w: [[95, 10, 1], [0, 28, 1]] },
  { n: 94, name: "Clavi", strip: "#3d58ae", row: "#282e40", clip: "#34509f", edge: "#769df0", led: [0, 22], w: [[32, 10, 1], [0, 28, 1]] },
  { n: 95, name: "Synth", strip: "#3883ae", row: "#27343e", clip: "#3468a4", edge: "#72aef0", led: [17, 18], w: [[37, 10, 0], [0, 28, 0]] },
];
const midi = Array.from({ length: 43 }, (_, i) => 48 + i);
const rowH = (n) => (n === 90 ? 22 : 14);
const resources = [
  { t: "CPU", kind: "cpu", color: c.cpu, a: "94%  4,06 GHz" },
  { t: "Arbeitsspeicher", kind: "mem", color: "#8b12ae", a: "6,8/31,9 GB (21%)" },
  { t: "Datenträger 0 (D:)", color: "#4da60c", a: "SSD", b: "0%" },
  { t: "Datenträger 1 (E:)", color: "#4da60c", a: "SSD", b: "1%" },
  { t: "Datenträger 2 (F:)", color: "#4da60c", a: "SSD", b: "0%" },
  { t: "Datenträger 3 (G:)", color: "#4da60c", a: "SSD", b: "0%" },
  { t: "Datenträger 4 (C:)", color: "#4da60c", a: "SSD", b: "0%" },
  { t: "WLAN", color: "#a74f01", a: "WLAN", b: <><em>Ges.:</em> 0 <em>Empf.:</em> 0 KBit/s</> },
  { t: "GPU 0", kind: "gpu", color: c.cpu, a: "Radeon RX 570 Ser...", b: "4%  (35 °C)" },
];
const specs = [["Basisgeschwindigkeit:", "3,79 GHz"], ["Sockets:", "1"], ["Kerne:", "12"], ["Logische Prozessoren:", "24"], ["Virtualisierung:", "Deaktiviert"], ["Hyper-V-Unterstützung:", "Ja"], ["L1-Cache:", "768 KB"], ["L2-Cache:", "6,0 MB"], ["L3-Cache:", "64,0 MB"]];
const tools = ["pointer", "range", "pencil", "eraser", "scissors", "glue", "mute", "zoom", "hand", "comp", "line", "speaker", "bucket"];

const IconCell = ({ n, size = 16, ...rest }) => <Cell aria-label={n} {...rest}><Icon n={n} size={size} /></Cell>;
const MuteSolo = (p) => <MS {...p}><button>m</button><button>S</button></MS>;

/* ---------- sections ---------- */
const TopBar = () => (
  <Bar>
    <Section $w={257}><Group $w={50}><IconCell n="undo" size={15} /><IconCell n="redo" size={15} /></Group></Section>
    <Section $gap={5}>
      <Group $w={150}>{["M", "S", "L", "R", "W", "A"].map((t) => <Cell key={t} $dim={t === "L"}>{t}</Cell>)}</Group>
      <Group $w={150}><IconCell n="auto" $on $w={25} size={17} /><Select label="Automation" value="Touch" /><IconCell n="edit" $w={25} size={15} /></Group>
      <Group $w={50} $dark><IconCell n="scroll" $on size={17} /><IconCell n="down" size={12} /></Group>
      <Group $w={338}><Grip $w={12} />{tools.map((t) => <IconCell key={t} n={t} size={15} $on={t === "pointer"} />)}</Group>
      <Section $gap={6}>
        <Group $w={43} $dark><IconCell n="palette" $w={24} size={16} /><IconCell n="down" size={12} /></Group>
        <Group $w={25}><IconCell n="cross" $on /></Group>
        <Group $w={138} $dark><IconCell n="snap" $on $w={25} size={15} /><Select label="Raster" value="Raster" /></Group>
        <Group $w={137} $dark><Select label="Rastertyp" value="Zählzeit" icon="hash" /></Group>
        <Group $w={224}><IconCell n="q" $w={24} /><Select label="Quantisierung" value="1/16" /><IconCell n="swing" $w={25} size={14} /><IconCell n="quant" $w={25} size={15} /><IconCell n="edit" $w={25} size={15} /></Group>
        <Group $w={25}><IconCell n="align" /></Group>
      </Section>
    </Section>
    <Section $right $gap={6}>
      <Group $w={99} $dark><IconCell n="zoneL" $on size={14} /><IconCell n="zoneB" $gray size={14} /><IconCell n="zoneR" $on size={14} /><IconCell n="setup" size={14} /></Group>
      <Group $w={19} $dark><IconCell n="gear" size={13} /></Group>
    </Section>
  </Bar>
);

const Inspector = () => (
  <Panel>
    <Tabs><Tab $on $w={70}>Inspecto.</Tab><Tab $w={80}>Sichtbark.</Tab><Tab $w={18} aria-label="Menü">=</Tab></Tabs>
    <PanelBody $side="left" $pad="8px 7px 0 6px">
      <Slot><Cell $w={18}><Icon n="right" size={11} /></Cell><SlotName>Retrologue<Icon n="right" size={8} /></SlotName></Slot>
      <BlueBar>
        <BlueGroup $w={44}><button>m</button><button>S</button></BlueGroup>
        <Section $gap={3}><Round $s={17} aria-label="Aufnahme"><Icon n="dot" size={11} /></Round><Round $s={13} aria-label="Monitor"><Icon n="mon" size={8} /></Round></Section>
        <BlueGroup $w={49} $plain><button aria-label="Bearbeiten"><Icon n="eq" size={9} /></button><button aria-label="Sperren"><Icon n="unlock" size={13} /></button></BlueGroup>
      </BlueBar>
      <TreeWrap>
        <Tree>
          <li><svg width="15" height="14" viewBox="0 0 15 14"><path d="M.5 3.500L2 .8h4l1.500 2.700h7v9H.5z" fill="#f5f8fc" stroke="#444" /></svg>Retrologue</li>
          {Array.from({ length: 8 }, (_, i) => <li key={i}><Icon n="piano" w={11} size={9} />{i ? "Duplicate Me! (D)" : "Duplicate Me!"}</li>)}
        </Tree>
        <TreeThumb />
      </TreeWrap>
    </PanelBody>
    <Tabs $bottom><Tab $on $bottom $w={66}>Spur</Tab><Tab $bottom $w={74}>Editor</Tab></Tabs>
  </Panel>
);

const AudioRow = ({ t }) => (
  <Row $h={42} $bg={t.row}>
    <Strip $bg={t.strip} $pt={3}><Icon n="wave" w={17} size={14} />{t.n}</Strip>
    <Ghost />
    <MuteSolo $mt={3} $ml={6} />
    <TrackMain $pt={2}>
      <Name $lh={19}>{t.name}</Name>
      <Controls>
        <Ctl $w={47} $dim><button aria-label="Aufnahme"><Icon n="dot" size={11} /></button><button aria-label="Monitor"><Icon n="mon" size={10} /></button></Ctl>
        <Ctl $w={50}><button aria-label="Kanal"><Icon n="edit" size={11} /></button><button aria-label="Format"><Icon n={t.mono ? "mono" : "stereo"} size={12} /></button></Ctl>
        <Ctl $w={46}><button>R</button><button>W</button></Ctl>
        <Ctl $w={22}><button aria-label="Spuren"><Icon n="lanes" size={15} /></button></Ctl>
      </Controls>
    </TrackMain>
    <Level>{t.led.map((h, i) => <Led key={i} $h={h} />)}</Level>
  </Row>
);

const TrackList = () => (
  <TrackCol>
    <TrackHead>
      <HeadBox $w={50}><IconCell n="plus" size={12} /><IconCell n="preset" size={14} /></HeadBox>
      <HeadBox $w={112} $dark $auto><Count>99 / 99</Count><IconCell n="house" size={14} /><IconCell n="list" size={12} /></HeadBox>
      <HeadBox $w={25}><IconCell n="search" size={13} /></HeadBox>
    </TrackHead>
    <Scroller>
      <Scrolled>
        {midi.map((n) => (
          <Row key={n} $h={rowH(n)}>
            <Strip $pt={n === 90 ? 3 : 0}><Icon n="piano" w={16} size={n === 90 ? 14 : 13} />{n}</Strip>
            <MuteSolo $mt={n === 90 ? 2 : -1} />
            <TrackMain $pt={n === 90 ? 4 : 0}><Name>Duplicate Me! (D)</Name></TrackMain>
            <Level />
          </Row>
        ))}
        <Row $h={42} $bg="#424446" $folder>
          <Strip $bg="#e6e6e6" $w={51} $pt={1}><Icon n="folder" w={19} size={16} /></Strip>
          <MuteSolo $mt={3} />
          <TrackMain $pt={2}>
            <Name $lh={19}>Dom Sigalas Playback</Name>
            <Controls>
              <Ctl $w={47}><button aria-label="Aufnahme"><Icon n="dot" size={11} /></button><button aria-label="Monitor"><Icon n="mon" size={10} /></button></Ctl>
              <Ctl $w={23}><button aria-label="Gruppe"><Icon n="eq" size={9} /></button></Ctl>
            </Controls>
          </TrackMain>
          <Level />
        </Row>
        {audio.map((t) => <AudioRow key={t.n} t={t} />)}
        <Row $h={22} $folder $bg="#24272a">
          <Strip $w={40} $bg="#1b1d1f" />
          <MuteSolo $mt={2} />
          <TrackMain $pt={2}><Name $lh={17}>Stereo Out</Name></TrackMain>
          <Zero>0.00</Zero>
          <Level><Led $h={14} /><Led $h={15} /></Level>
        </Row>
      </Scrolled>
    </Scroller>
    <ListFoot><span>-</span><Icon n="smallDown" size={11} /><Icon n="gear" size={13} /></ListFoot>
  </TrackCol>
);

const Timeline = () => (
  <Arrange>
    <Ruler>
      <Bars>
        {Array.from({ length: 18 }, (_, i) => (
          <Tick key={i} $loop={i < 4} $edge={i === 0 ? "l" : i === 3 ? "r" : ""}>{i < 17 ? 1 + i * 4 : ""}</Tick>
        ))}
      </Bars>
      <RulerBtn aria-label="Lineal"><Icon n="down" size={10} /></RulerBtn>
    </Ruler>
    <LaneArea>
      <Lanes>
        <Scrolled>
          {midi.map((n) => <Lane key={n} $h={rowH(n)}><MidiPart $tall={n === 90} /></Lane>)}
          <Lane $h={42}>
            {[0, 1].map((k) => (
              <Clip key={k} $edge="#fff" $bg="linear-gradient(#d4c8e2 17px, #5540a6 17px 20px, #e8e8f2 20px 22px, #3a55a8 22px 28px, #e8e8f2 28px 30px, #3568a6 30px)">
                <ClipName $dark $bg="#d4c8e2">Dom Sigalas Playback</ClipName>
              </Clip>
            ))}
          </Lane>
          {audio.map((t) => (
            <Lane key={t.n} $h={42}>
              {[0, 1].map((k) => (
                <Clip key={k} $edge={t.edge} $bg={t.clip}><ClipName $bg={t.clip}>{t.name}</ClipName><Waveform seed={t.n} rows={t.w} /></Clip>
              ))}
            </Lane>
          ))}
          <Lane $h={22} $line><AutoLine /></Lane>
        </Scrolled>
      </Lanes>
      <VZoom><b /><i />+</VZoom>
    </LaneArea>
    <HBar><Thumb /><Rail /><HZoom><Icon n="smallDown" size={9} />−<Rail $w={17} /><b /><Rail $w={27} />+</HZoom></HBar>
    <Playhead />
  </Arrange>
);

const Project = () => (
  <Panel $plain>
    <PanelBody><Center><TrackList /><Timeline /></Center></PanelBody>
  </Panel>
);

const MeterPanel = () => (
  <Panel>
    <Tabs $end><Tab $w={50}>VSTi</Tab><Tab $w={74}>Medien</Tab><Tab $w={42}>CR</Tab><Tab $on $w={60}>Meter</Tab></Tabs>
    <PanelBody $side="right" $pad="8px 6px 0 6px">
      <MeterHead><button>CR</button></MeterHead>
      <ScaleBar><span>Digitale Skale</span><span>-18 dBFS</span></ScaleBar>
      <ScaleBtns><button aria-label="Halten" /><button aria-label="Zurücksetzen"><Icon n="rew" size={9} w={13} /></button></ScaleBtns>
      <MeterWrap><Meter /></MeterWrap>
      <Readout><div><dt>RMS Max.</dt><dd>-20.7</dd></div><div><dt>Spitzenpegel Max.</dt><dd>-4.7</dd></div></Readout>
    </PanelBody>
    <Tabs $bottom><Tab $on $bottom $w={80}>Master</Tab><Tab $bottom $w={86}>Lautheit</Tab></Tabs>
  </Panel>
);

const TransportBar = () => (
  <Transport>
    <Section $gap={5}>
      <Group $w={25}><IconCell n="clock" size={17} /></Group>
      <Section>
        {["dot", "wave", "midi"].map((n) => (
          <React.Fragment key={n}><Group $w={44} $dark><IconCell n={n} size={16} $w={24} /><IconCell n="down" size={11} /></Group><Grip /></React.Fragment>
        ))}
        <Orange>AQ</Orange>
      </Section>
    </Section>
    <Section $ml="132px" $gap={5}>
      <Group $w={150} $dark><IconCell n="locL" $gray $w={24} size={14} /><Time>{"1.   1.   1.    0"}</Time></Group>
      <Group $w={150} $dark><IconCell n="locR" $gray $w={24} size={14} /><Time>{"17.   1.   1.    0"}</Time></Group>
      <Section>
        <Group $w={75}><IconCell n="lock" $on size={14} /><IconCell n="punchI" size={12} /><IconCell n="punchO" size={12} /></Group>
        <Grip />
        <Deck>
          <DeckBtn $bg="#8570e4" aria-label="Cycle"><Icon n="cycle" size={17} /></DeckBtn>
          <DeckBtn aria-label="Stop"><Icon n="stop" size={13} /></DeckBtn>
          <DeckBtn $bg="#35d935" aria-label="Start"><Icon n="play" size={17} /></DeckBtn>
          <DeckBtn aria-label="Aufnahme"><Icon n="rec" size={15} /></DeckBtn>
        </Deck>
        <Grip />
        <Group $w={38}><IconCell n="remote" $dim size={14} /></Group>
      </Section>
      <Section>
        <Group $w={150} $dark><IconCell n="note" $w={23} size={15} /><Time>{"11.   1.  1.161"}</Time></Group>
        <Grip />
        <Group $w={157} $dark><IconCell n="tempo" $on $w={24} size={16} /><Time $small>98.000</Time><SpinBox aria-label="Tempo ändern"><Icon n="spin" size={15} /></SpinBox><Meas>4/4</Meas></Group>
        <Grip />
      </Section>
    </Section>
    <Section $right>
      <Section $gap={3}>
        <Load $w={139} $fill={90} $color="#c8ccd4" $tick><i /><i /></Load>
        <Load $w={12} $fill={100} $color="#d4552e"><i /><i /></Load>
      </Section>
      <Section $ml="15px">
        <Group $w={150} $dark><IconCell n="metro" $gray $w={27} /><IconCell n="count" $gray $w={27} size={12} /><Dashes><i /><i /><i /><i /></Dashes><IconCell n="edit" $gray $w={24} size={15} /></Group>
        <Grip />
        <Group $w={89} $dark><OutMeter><i /><i /></OutMeter></Group>
        <Grip />
        <Group $w={19} $dark><IconCell n="gear" size={13} /></Group>
      </Section>
    </Section>
    <EdgeStrip $x={48} $w={344} $bg="#f2f2f2" />
    <EdgeStrip $x={786} $w={48} $bg="#5e6062" />
  </Transport>
);

const TaskManager = () => (
  <Window>
    <TitleBar>
      <svg width="16" height="15" viewBox="0 0 16 15"><path d="M0 5h3v9H0z" fill="#c9cfc4" stroke="#7b8a7a" strokeWidth=".6" /><path d="M4 1h11.500v9H4z" fill="#d8eefa" stroke="#6d7f8c" /><path d="M5 6l2-2 2 3 2-2 3 2" fill="none" stroke="#1583c4" strokeWidth="1.200" /><path d="M8 10h4v2h2v1.500H6V12h2z" fill="#9aa5ad" /></svg>
      Task-Manager
      <WinBtns>{["min", "max", "close"].map((n) => <button key={n} aria-label={n}><Icon n={n} size={11} /></button>)}</WinBtns>
    </TitleBar>
    <Menu><span>Datei</span><span>Optionen</span><span>Ansicht</span></Menu>
    <TmTabs>
      {[["Prozesse", 55], ["Leistung", 60], ["App-Verlauf", 73], ["Autostart", 61], ["Benutzer", 58], ["Details", 48], ["Dienste", 49]].map(([t, w]) => <TmTab key={t} $w={w} $on={t === "Leistung"}>{t}</TmTab>)}
    </TmTabs>
    <TmBody>
      <Side>
        {resources.map((r, i) => (
          <SideItem key={r.t} $short={i < 2} $on={i === 0}>
            <Mini kind={r.kind} color={r.color} h={i < 2 ? 40 : 46} />
            <SideText><strong>{r.t}</strong><span>{r.a}</span>{r.b && <span>{r.b}</span>}</SideText>
          </SideItem>
        ))}
      </Side>
      <Divider />
      <Detail>
        <HeadLine><h1>CPU</h1>AMD Ryzen 9 3900X 12-Core Processor</HeadLine>
        <Caption><span>Auslastung in 60 Sekunden (%)</span><span>100%</span></Caption>
        <Cores>{Array.from({ length: 24 }, (_, i) => <Core key={i} i={i} />)}</Cores>
        <Stats>
          <Big>
            <BigRow $gap={22}><Figure>Auslastung<output>94%</output></Figure><Figure>Geschwindigkeit<output>4,06 GHz</output></Figure></BigRow>
            <BigRow $gap={21}><Figure>Prozesse<output>123</output></Figure><Figure>Threads<output>1474</output></Figure><Figure>Handles<output>60065</output></Figure></BigRow>
            <BigRow><Figure>Betriebszeit<output>6:08:47:47</output></Figure></BigRow>
          </Big>
          <Specs><tbody>{specs.map(([k, v]) => <tr key={k}><th scope="row">{k}</th><td>{v}</td></tr>)}</tbody></Specs>
        </Stats>
      </Detail>
    </TmBody>
    <TmFoot>
      <button><Icon n="chev" size={19} />Weniger Details</button>
      <i />
      <svg width="16" height="16" viewBox="0 0 16 16"><circle cx="8" cy="8" r="7.300" fill="#e8e4e0" stroke="#6f6a66" /><circle cx="8" cy="8" r="5" fill="#fff" stroke="#aaa" strokeWidth=".6" /><path d="M4 3l5 8 1-1z" fill="#c8202a" stroke="#c8202a" /></svg>
      <a href="#resmon">Ressourcenmonitor öffnen</a>
    </TmFoot>
  </Window>
);

export default function App() {
  return (
    <Page>
      <Global />
      <TopBar />
      <Workspace>
        <Inspector />
        <Project />
        <MeterPanel />
      </Workspace>
      <TransportBar />
      <TaskManager />
    </Page>
  );
}
